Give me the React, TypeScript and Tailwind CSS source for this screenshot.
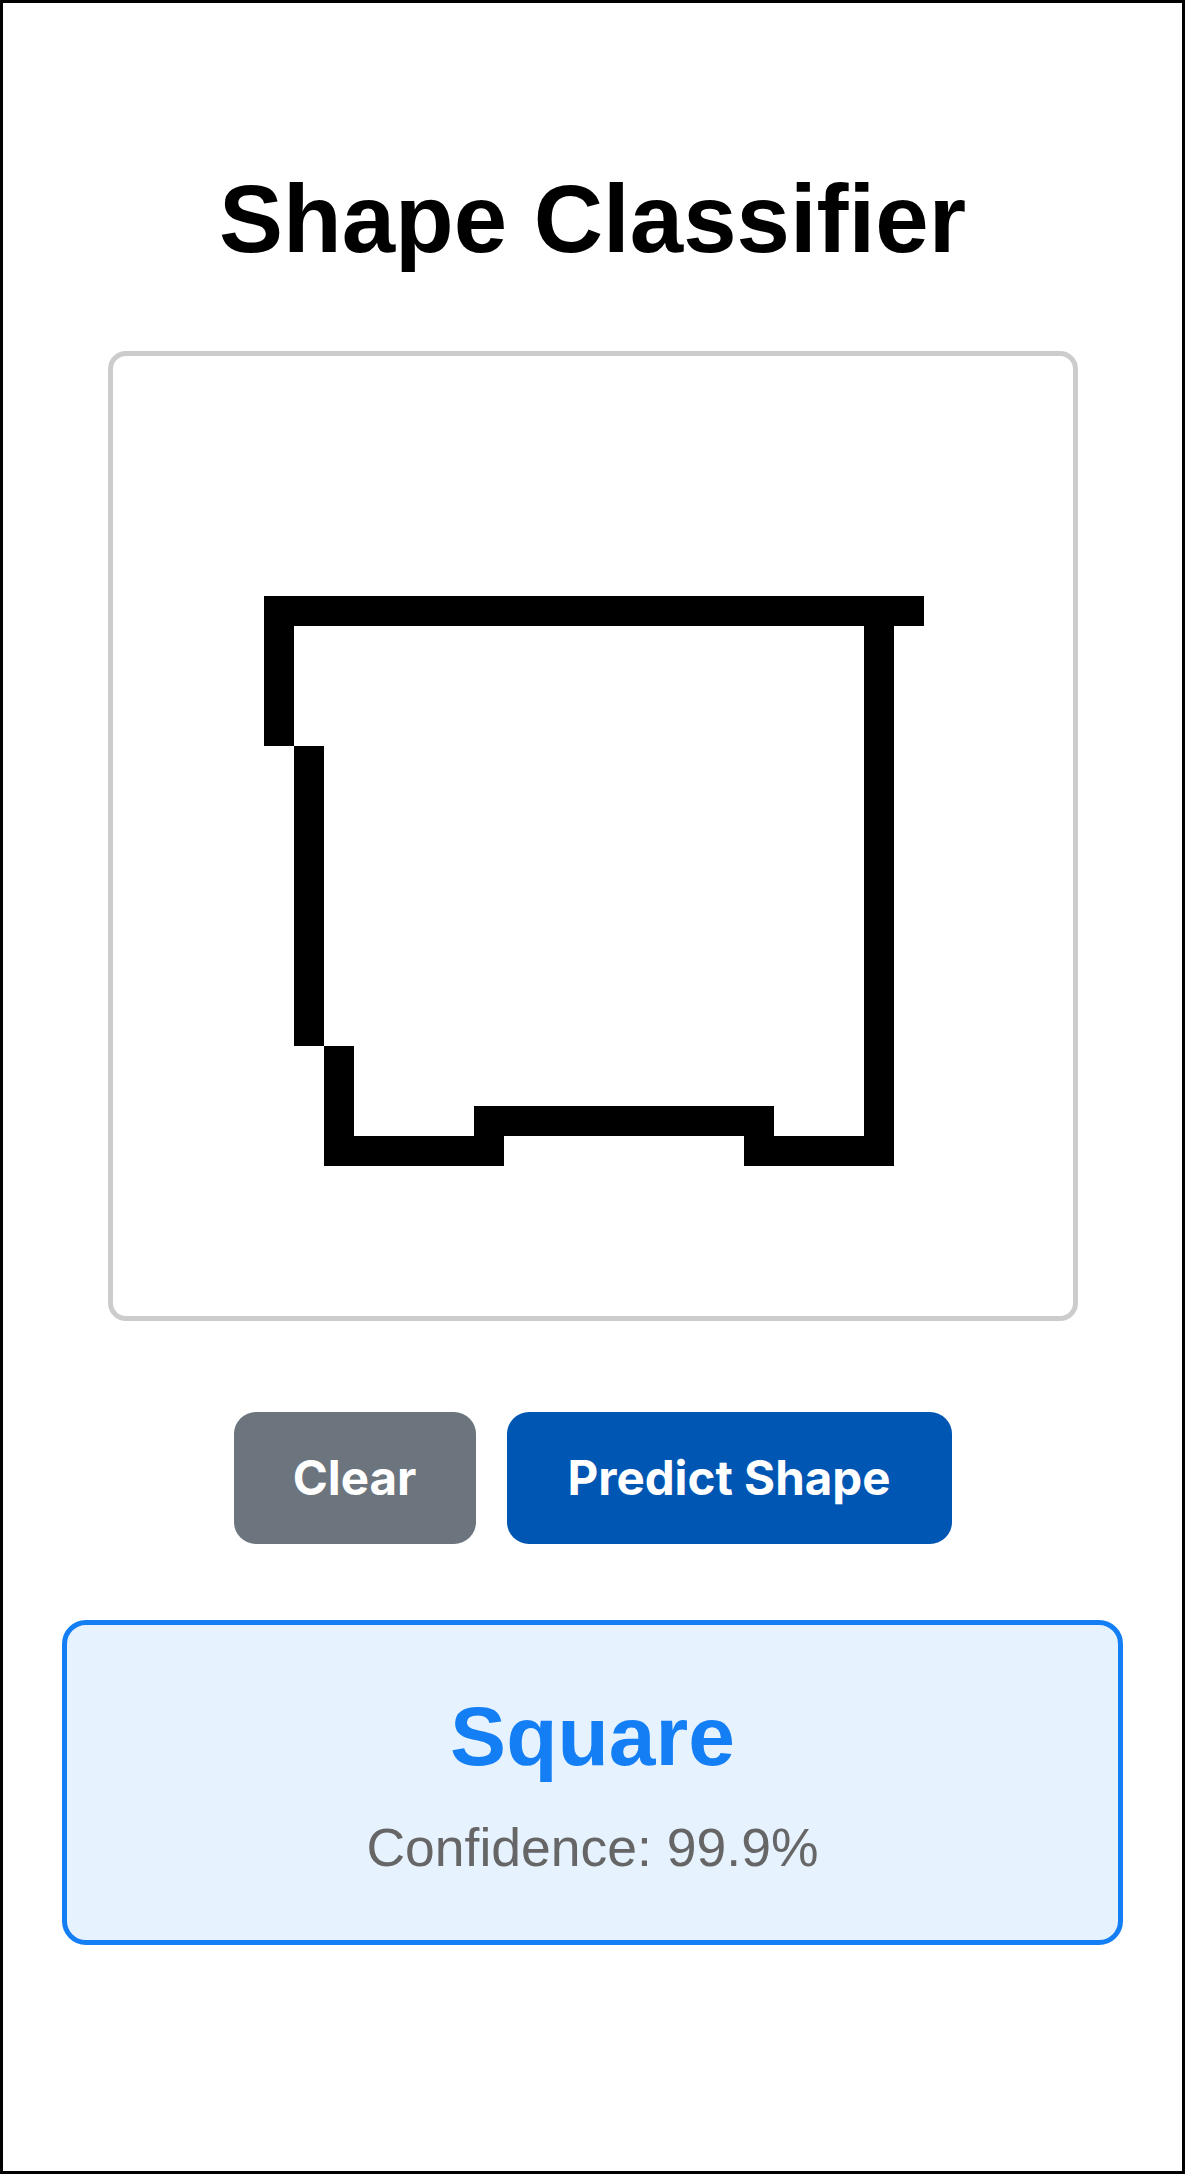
import React from "react";

const cells: [number, number, number, number][] = [
  [151, 240, 660, 30],
  [151, 270, 30, 120],
  [181, 390, 30, 300],
  [211, 690, 30, 120],
  [211, 780, 180, 30],
  [361, 750, 300, 30],
  [631, 780, 150, 30],
  [751, 240, 30, 570],
];

export default function App() {
  return (
    <div className="box-border flex h-[2174px] w-full flex-col items-center border-[3px] border-black bg-white pt-[168px] [font-family:'Liberation_Sans',Arial,sans-serif]">
      <h1 className="text-[96px] font-bold leading-[96px] text-black">Shape Classifier</h1>

      <div className="mt-[84px] box-border h-[970px] w-[970px] overflow-hidden rounded-[18px] border-[5px] border-[#cccccc] bg-white">
        <svg width="960" height="960" viewBox="0 0 960 960" shapeRendering="crispEdges">
          {cells.map(([x, y, w, h], i) => (
            <rect key={i} x={x} y={y} width={w} height={h} fill="#000" />
          ))}
        </svg>
      </div>

      <div className="mt-[91px] flex gap-[31px] [font-family:Inter,'Noto_Sans',sans-serif]">
        <button className="flex h-[132px] w-[242px] items-center justify-center rounded-[22px] bg-[#6c757d] text-[47.5px] font-bold leading-none text-white">
          Clear
        </button>
        <button className="flex h-[132px] w-[445px] items-center justify-center rounded-[22px] bg-[#0056b3] text-[47.5px] font-bold leading-none text-white">
          Predict Shape
        </button>
      </div>

      <div className="mt-[76px] box-border flex h-[325px] w-[1061px] flex-col items-center rounded-[24px] border-[5px] border-[#147ff5] bg-[#e6f2fe] pt-[69px]">
        <div className="text-[84px] font-bold leading-[84px] text-[#147ff5]">Square</div>
        <div className="mt-[43px] text-[53.5px] leading-[53.5px] text-[#666666]">Confidence: 99.9%</div>
      </div>
    </div>
  );
}
